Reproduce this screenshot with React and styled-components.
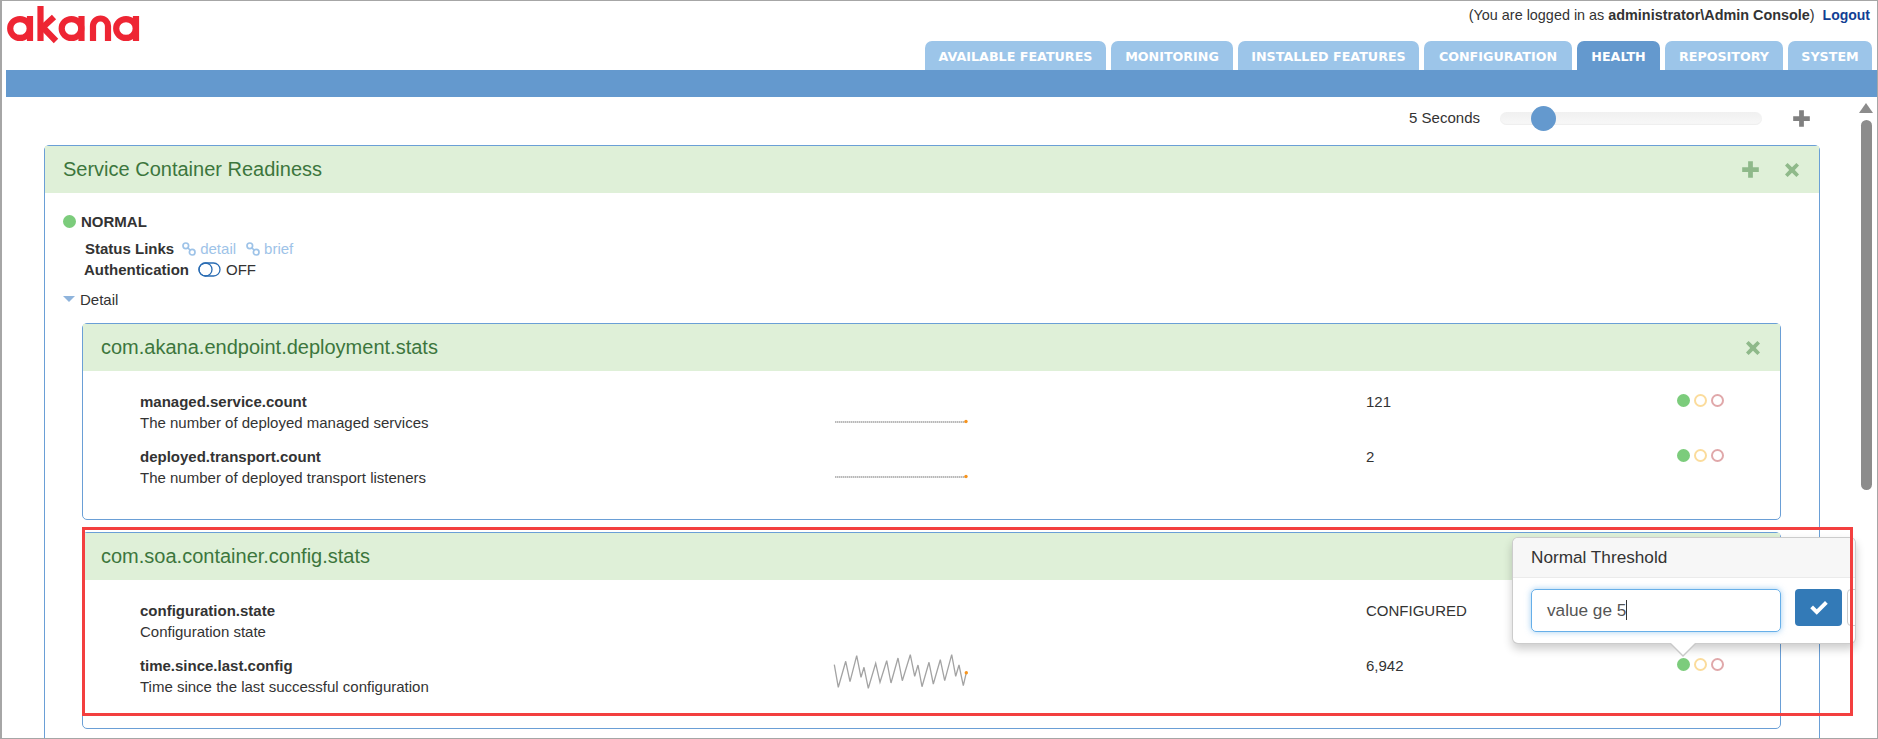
import React from 'react';
import styled, { createGlobalStyle } from 'styled-components';

const GlobalStyle = createGlobalStyle`
  html, body {
    margin: 0;
    padding: 0;
    background: #fff;
  }
  * {
    box-sizing: border-box;
  }
`;

const Page = styled.div`
  position: relative;
  width: 1878px;
  height: 739px;
  overflow: hidden;
  background: #fff;
  border: 1px solid #a6a6a6;
  border-left-width: 2px;
  font-family: 'Liberation Sans', Arial, sans-serif;
  font-size: 15px;
  color: #333;
`;

const Header = styled.header`
  display: flex;
  justify-content: space-between;
  height: 69px;
  padding-right: 5px;
`;

const Logo = styled.svg`
  display: block;
  width: 150px;
  height: 60px;
  margin-left: -2px;
  margin-top: -1px;
  fill: none;
  stroke: #ee2533;
  stroke-width: 6.2;
`;

const HeaderRight = styled.div`
  display: flex;
  flex-direction: column;
  align-items: flex-end;
`;

const LoginLine = styled.div`
  height: 40px;
  padding: 5px 2px 0 0;
  line-height: 18px;
  font-size: 14.4px;
  color: #333;

  b {
    font-weight: 700;
  }

  a {
    margin-left: 8px;
    font-size: 14px;
    font-weight: 700;
    color: #123f94;
  }
`;

const Tabs = styled.nav`
  display: flex;
  gap: 5px;
`;

const Tab = styled.div`
  width: ${(props) => props.$width}px;
  height: 29px;
  border-radius: 7px 7px 0 0;
  background: ${(props) => (props.$active ? '#6499ce' : '#9cc5e9')};
  color: #fff;
  font-family: 'DejaVu Sans', Verdana, sans-serif;
  font-size: 12.7px;
  font-weight: 700;
  line-height: 32px;
  text-align: center;
  white-space: nowrap;
`;

const NavStrip = styled.div`
  height: 27px;
  margin-left: 4px;
  background: #6499ce;
`;

const Body = styled.div`
  display: flex;
`;

const Main = styled.main`
  flex: none;
  width: 1818px;
  padding-left: 42px;
`;

const ScrollColumn = styled.div`
  flex: 1;
  display: flex;
  flex-direction: column;
  padding: 6px 0 0 39px;
`;

const ScrollArrow = styled.div`
  width: 0;
  height: 0;
  border-left: 7px solid transparent;
  border-right: 7px solid transparent;
  border-bottom: 10px solid #8c8c8c;
`;

const ScrollThumb = styled.div`
  width: 11px;
  height: 370px;
  margin: 7px 0 0 2px;
  border-radius: 6px;
  background: #8c8c8c;
`;

const ToolRow = styled.div`
  display: flex;
  align-items: center;
  justify-content: flex-end;
  height: 48px;
  padding: 0 9px 6px 0;
`;

const RateLabel = styled.span`
  margin: -1px 20px 0 0;
`;

const SliderTrack = styled.div`
  position: relative;
  width: 262px;
  height: 13px;
  margin-right: 30px;
  border-radius: 7px;
  background: linear-gradient(#f0f0f0, #f8f8f8);
  box-shadow: inset 0 -1px 1px #eee;
`;

const SliderThumb = styled.div`
  position: absolute;
  top: -6px;
  left: 31px;
  width: 25px;
  height: 25px;
  border-radius: 50%;
  background: #6499ce;
`;

const Card = styled.section`
  border: 1px solid #6a9fd6;
  border-radius: 5px;
`;

const OuterCard = styled(Card)`
  padding-bottom: 40px;
`;

const InnerCard = styled(Card)`
  margin-top: ${(props) => props.$gap || 0}px;
`;

const CardHeader = styled.div`
  display: flex;
  align-items: center;
  justify-content: space-between;
  height: 47px;
  padding: 0 19px 0 18px;
  background: #dff0d8;
  color: #3c763d;
  font-size: 20px;
`;

const HeaderIcons = styled.div`
  display: flex;
  align-items: center;
  gap: 24px;
`;

const Glyph = styled.svg`
  display: block;
  width: ${(props) => props.$size || 19}px;
  height: ${(props) => props.$size || 19}px;
  fill: ${(props) => props.$color || '#8fb98a'};
`;

const OuterBody = styled.div`
  padding: 22px 38px 0 18px;
`;

const StatusLine = styled.div`
  display: flex;
  align-items: center;
  gap: 5px;
  height: 13px;
  font-weight: 700;
`;

const Dot = styled.span`
  flex: none;
  width: 13px;
  height: 13px;
  border-radius: 50%;
  background: ${(props) => (props.$fill ? props.$color : 'transparent')};
  border: 2px solid ${(props) => props.$color};
`;

const InfoLine = styled.div`
  display: flex;
  align-items: center;
  height: 21px;
  margin-top: ${(props) => props.$top || 0}px;
  padding-left: ${(props) => props.$indent}px;

  b {
    margin-right: ${(props) => props.$labelGap}px;
  }
`;

const StatusLink = styled.a`
  display: flex;
  align-items: center;
  gap: 4px;
  margin-right: 10px;
  color: #9ec3e8;
`;

const LinkGlyph = styled.svg`
  width: 14px;
  height: 14px;
  fill: none;
  stroke: #9ec3e8;
  stroke-width: 1.7;
`;

const Toggle = styled.svg`
  width: 23px;
  height: 15px;
  margin-right: 5px;
  fill: none;
  stroke: #2a6cb3;
  stroke-width: 1.3;
`;

const DetailToggle = styled.div`
  display: flex;
  align-items: center;
  gap: 5px;
  height: 20px;
  margin-top: 9px;

  i {
    width: 0;
    height: 0;
    border-left: 6px solid transparent;
    border-right: 6px solid transparent;
    border-top: 6px solid #8fb4dc;
  }
`;

const DetailArea = styled.div`
  padding: 14px 0 0 19px;
`;

const Metrics = styled.div`
  display: flex;
  flex-direction: column;
  gap: 13px;
  padding: 20px 0 31px 57px;
`;

const MetricRow = styled.div`
  display: grid;
  grid-template-columns: 695px 531px 311px 1fr;
  line-height: 21px;
`;

const MetricName = styled.div`
  font-weight: 700;
`;

const SparkCell = styled.div`
  height: 42px;
  padding-top: 1px;
`;

const Spark = styled.svg`
  display: block;
  width: 133px;
  height: 41px;
  overflow: visible;
  fill: none;
  stroke: #a3a3a3;
  stroke-width: 1.3;
`;

const Lights = styled.div`
  display: flex;
  gap: 4px;
  padding-top: 3px;
`;

const Popover = styled.div`
  position: absolute;
  top: 536px;
  left: 1510px;
  width: 344px;
  height: 107px;
  background: #fff;
  border: 1px solid rgba(0, 0, 0, 0.2);
  border-radius: 6px;
  box-shadow: 0 5px 10px rgba(0, 0, 0, 0.2);

  &::before,
  &::after {
    content: '';
    position: absolute;
    left: 157px;
    width: 0;
    height: 0;
    border-left: 13px solid transparent;
    border-right: 13px solid transparent;
  }

  &::before {
    bottom: -14px;
    border-top: 13px solid #c9c9c9;
  }

  &::after {
    bottom: -12px;
    border-top: 13px solid #fff;
  }
`;

const PopoverTitle = styled.div`
  height: 40px;
  padding-left: 18px;
  border-bottom: 1px solid #ebebeb;
  border-radius: 5px 5px 0 0;
  background: #f7f7f7;
  font-size: 17.2px;
  line-height: 38px;
`;

const PopoverBody = styled.div`
  display: flex;
  align-items: flex-start;
  gap: 14px;
  height: 65px;
  padding: 11px 0 0 18px;
  overflow: hidden;
`;

const ThresholdInput = styled.div`
  flex: none;
  width: 250px;
  height: 43px;
  padding-left: 15px;
  border: 1px solid #66afe9;
  border-radius: 5px;
  box-shadow: 0 0 6px rgba(102, 175, 233, 0.6);
  color: #555;
  font-size: 17.2px;
  line-height: 41px;
`;

const Caret = styled.span`
  display: inline-block;
  width: 1px;
  height: 20px;
  vertical-align: -4px;
  background: #333;
`;

const ConfirmButton = styled.div`
  display: flex;
  flex: none;
  align-items: center;
  justify-content: center;
  width: 47px;
  height: 37px;
  border-radius: 4px;
  background: #337ab7;
`;

const CancelButton = styled.div`
  flex: none;
  width: 47px;
  height: 37px;
  margin-left: -9px;
  border: 1px solid #ccc;
  border-radius: 4px;
`;

const Callout = styled.div`
  position: absolute;
  top: 526px;
  left: 80px;
  width: 1771px;
  height: 189px;
  border: 3px solid #f33f3f;
  pointer-events: none;
`;

const tabs = [
  ['AVAILABLE FEATURES', 181],
  ['MONITORING', 122],
  ['INSTALLED FEATURES', 181],
  ['CONFIGURATION', 148],
  ['HEALTH', 83, true],
  ['REPOSITORY', 118],
  ['SYSTEM', 84],
];

const wavePoints =
  '-0.7,8.7 3.3,31.3 10.7,5.3 15,25.7 21.7,-0.3 26,21.3 29,11.3 33.3,32.3 40.7,7.3 45,26.3 51.7,4.7 56,27 63,2 67.3,24.7 75.3,-1.3 79.7,20.3 83,9 87,30.7 94,6.3 98.3,28 105.3,3.7 109.7,24.7 116.7,-1.3 120.7,20.3 124,9 128.3,29.7 131.3,16.7';

const PlusIcon = ({ color }) => (
  <Glyph viewBox="0 0 16 16" $color={color}>
    <path d="M6 1h4v5h5v4h-5v5H6v-5H1V6h5z" />
  </Glyph>
);

const CloseIcon = ({ color }) => (
  <Glyph viewBox="0 0 16 16" $color={color} $size={16}>
    <path d="M3.6 1 8 5.2 12.4 1 15 3.6 10.8 8l4.2 4.4-2.6 2.6L8 10.8 3.6 15 1 12.4 5.2 8 1 3.6z" />
  </Glyph>
);

const ChainIcon = () => (
  <LinkGlyph viewBox="0 0 14 14">
    <circle cx="3.8" cy="3.8" r="2.8" />
    <circle cx="10.2" cy="10.2" r="2.8" />
    <path d="M5.5 5.5 8.5 8.5" />
  </LinkGlyph>
);

const Sparkline = ({ points, dot, dashed }) => (
  <Spark viewBox="0 0 133 41">
    <polyline points={points} strokeDasharray={dashed ? '1.5 0.5' : undefined} />
    <circle cx={dot[0]} cy={dot[1]} r="1.7" fill="#f7941d" stroke="none" />
  </Spark>
);

const Metric = ({ name, desc, value, spark }) => (
  <MetricRow>
    <div>
      <MetricName>{name}</MetricName>
      <div>{desc}</div>
    </div>
    <SparkCell>{spark}</SparkCell>
    <div>{value}</div>
    <Lights>
      <Dot $fill $color="#7ccc7c" />
      <Dot $color="#fbdc9c" />
      <Dot $color="#e0a8aa" />
    </Lights>
  </MetricRow>
);

const flat = <Sparkline points="0,30 131,30" dot={[131, 29.5]} dashed />;

export default function App() {
  return (
    <Page>
      <GlobalStyle />
      <Header>
        <Logo viewBox="0 0 150 60">
          <ellipse cx="20" cy="28.5" rx="9.8" ry="9.4" />
          <path d="M30 16v25" />
          <path d="M40.5 6v35" />
          <path d="M41 29 54 17M42 26.5 56 41" />
          <ellipse cx="71.5" cy="28.5" rx="9.8" ry="9.4" />
          <path d="M81.5 16v25" />
          <path d="M93 41V26a7.5 7.5 0 0 1 15 0v15" />
          <ellipse cx="126" cy="28.5" rx="9.8" ry="9.4" />
          <path d="M136 16v25" />
        </Logo>
        <HeaderRight>
          <LoginLine>
            (You are logged in as <b>administrator\Admin Console</b>)
            <a>Logout</a>
          </LoginLine>
          <Tabs>
            {tabs.map(([label, width, active]) => (
              <Tab key={label} $width={width} $active={active}>
                {label}
              </Tab>
            ))}
          </Tabs>
        </HeaderRight>
      </Header>
      <NavStrip />
      <Body>
        <Main>
          <ToolRow>
            <RateLabel>5 Seconds</RateLabel>
            <SliderTrack>
              <SliderThumb />
            </SliderTrack>
            <PlusIcon color="#808080" />
          </ToolRow>
          <OuterCard>
            <CardHeader>
              Service Container Readiness
              <HeaderIcons>
                <PlusIcon />
                <CloseIcon />
              </HeaderIcons>
            </CardHeader>
            <OuterBody>
              <StatusLine>
                <Dot $fill $color="#7ccc7c" />
                NORMAL
              </StatusLine>
              <InfoLine $indent={22} $top={10} $labelGap={8}>
                <b>Status Links</b>
                <StatusLink>
                  <ChainIcon />
                  detail
                </StatusLink>
                <StatusLink>
                  <ChainIcon />
                  brief
                </StatusLink>
              </InfoLine>
              <InfoLine $indent={21} $labelGap={9}>
                <b>Authentication</b>
                <Toggle viewBox="0 0 23 15">
                  <rect x="1" y="1" width="21" height="13" rx="6.5" />
                  <circle cx="7.5" cy="7.5" r="6.5" />
                </Toggle>
                OFF
              </InfoLine>
              <DetailToggle>
                <i />
                Detail
              </DetailToggle>
              <DetailArea>
                <InnerCard>
                  <CardHeader>
                    com.akana.endpoint.deployment.stats
                    <CloseIcon />
                  </CardHeader>
                  <Metrics>
                    <Metric
                      name="managed.service.count"
                      desc="The number of deployed managed services"
                      value="121"
                      spark={flat}
                    />
                    <Metric
                      name="deployed.transport.count"
                      desc="The number of deployed transport listeners"
                      value="2"
                      spark={flat}
                    />
                  </Metrics>
                </InnerCard>
                <InnerCard $gap={12}>
                  <CardHeader>
                    com.soa.container.config.stats
                    <CloseIcon />
                  </CardHeader>
                  <Metrics>
                    <Metric
                      name="configuration.state"
                      desc="Configuration state"
                      value="CONFIGURED"
                    />
                    <Metric
                      name="time.since.last.config"
                      desc="Time since the last successful configuration"
                      value="6,942"
                      spark={<Sparkline points={wavePoints} dot={[131.3, 16.7]} />}
                    />
                  </Metrics>
                </InnerCard>
              </DetailArea>
            </OuterBody>
          </OuterCard>
        </Main>
        <ScrollColumn>
          <ScrollArrow />
          <ScrollThumb />
        </ScrollColumn>
      </Body>
      <Popover>
        <PopoverTitle>Normal Threshold</PopoverTitle>
        <PopoverBody>
          <ThresholdInput>
            value ge 5
            <Caret />
          </ThresholdInput>
          <ConfirmButton>
            <Glyph viewBox="0 0 16 16" $color="#fff" $size={20}>
              <path d="M6.2 13.4 1 8.2l2.2-2.2 3 3L12.8 2.4 15 4.6z" />
            </Glyph>
          </ConfirmButton>
          <CancelButton />
        </PopoverBody>
      </Popover>
      <Callout />
    </Page>
  );
}
